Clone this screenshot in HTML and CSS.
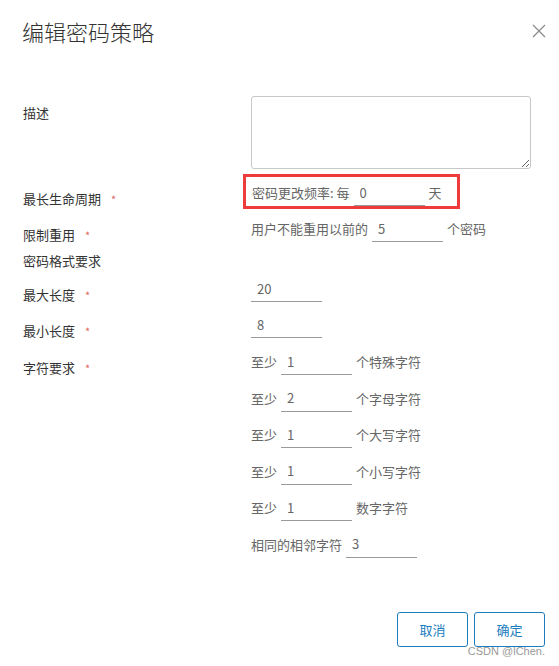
FILE: index.html
```html
<!DOCTYPE html>
<html lang="zh">
<head>
<meta charset="utf-8">
<title>编辑密码策略</title>
<link rel="stylesheet" href="styles.css">
</head>
<body>
<div class="dialog">
  <div class="header">
    <h1 class="title">编辑密码策略</h1>
    <button class="close" aria-label="关闭">
      <svg width="14" height="14" viewBox="0 0 14 14"><path d="M1 1L13 13M13 1L1 13" stroke="#8a8a8a" stroke-width="1.2" fill="none"/></svg>
    </button>
  </div>
  <div class="form">
    <div class="row row-desc">
      <div class="label">描述</div>
      <div class="control"><textarea class="desc"></textarea></div>
    </div>
    <div class="row row-life">
      <div class="label">最长生命周期<span class="req">*</span></div>
      <div class="control">
        <div class="highlight">
          <span class="txt">密码更改频率: 每</span>
          <input class="line" value="0">
          <span class="txt">天</span>
        </div>
      </div>
    </div>
    <div class="row row-reuse">
      <div class="label">限制重用<span class="req">*</span></div>
      <div class="control">
        <span class="txt">用户不能重用以前的</span>
        <input class="line" value="5">
        <span class="txt">个密码</span>
      </div>
    </div>
    <div class="section">密码格式要求</div>
    <div class="row row-max">
      <div class="label">最大长度<span class="req">*</span></div>
      <div class="control"><input class="line first" value="20"></div>
    </div>
    <div class="row row-min">
      <div class="label">最小长度<span class="req">*</span></div>
      <div class="control"><input class="line first" value="8"></div>
    </div>
    <div class="row row-chars">
      <div class="label">字符要求<span class="req">*</span></div>
      <div class="control stack">
        <div class="sub"><span class="txt">至少</span><input class="line" value="1"><span class="txt">个特殊字符</span></div>
        <div class="sub"><span class="txt">至少</span><input class="line" value="2"><span class="txt">个字母字符</span></div>
        <div class="sub"><span class="txt">至少</span><input class="line" value="1"><span class="txt">个大写字符</span></div>
        <div class="sub"><span class="txt">至少</span><input class="line" value="1"><span class="txt">个小写字符</span></div>
        <div class="sub"><span class="txt">至少</span><input class="line" value="1"><span class="txt">数字字符</span></div>
        <div class="sub"><span class="txt">相同的相邻字符</span><input class="line" value="3"></div>
      </div>
    </div>
  </div>
  <div class="footer">
    <button class="btn">取消</button>
    <button class="btn">确定</button>
  </div>
  <div class="watermark">CSDN @lChen.</div>
</div>
</body>
</html>
```
FILE: styles.css
```css
* { box-sizing: border-box; }
html, body { margin: 0; padding: 0; background: #fff; }
body {
  font-family: "Noto Sans CJK SC", "Noto Sans", sans-serif;
  font-size: 13px;
  color: #333;
}
.dialog {
  position: relative;
  width: 559px;
  height: 666px;
}
.header {
  display: flex;
  align-items: center;
  justify-content: space-between;
  padding: 16px 13px 0 22px;
  height: 46px;
}
.title {
  margin: 0;
  font-size: 22px;
  font-weight: 300;
  line-height: 28px;
  color: #333;
}
.close {
  border: 0;
  background: none;
  padding: 0;
  width: 14px;
  height: 14px;
  display: flex;
}
.form {
  display: flex;
  flex-direction: column;
  margin-top: 50px;
}
.row {
  display: grid;
  grid-template-columns: 251px 1fr;
  align-items: start;
}
.label {
  padding-left: 23px;
  padding-top: 10px;
  height: 26px;
  line-height: 18px;
  color: #333;
  white-space: nowrap;
}
.req {
  color: #e06666;
  font-size: 11px;
  margin-left: 10px;
  vertical-align: top;
}
.control {
  display: flex;
  align-items: center;
  height: 26px;
}
.txt {
  color: #666;
  line-height: 18px;
  white-space: nowrap;
}
.line {
  width: 71px;
  height: 26px;
  border: 0;
  border-bottom: 1px solid #9a9a9a;
  padding: 0 6px 1px;
  margin: 0 4px;
  font-family: inherit;
  font-size: 13px;
  color: #666;
  background: transparent;
  outline: none;
}
.line.first { margin-left: 0; }
.row-desc .label { padding-top: 8px; }
.row-desc .control { height: auto; }
.desc {
  display: block;
  width: 280px;
  height: 73px;
  border: 1px solid #c8c8c8;
  border-radius: 3px;
  margin: 0;
  font-family: inherit;
  font-size: 13px;
}
.row-life { margin-top: 5px; }
.row-life .label { padding-top: 16px; height: 35px; }
.row-life .control { height: auto; }
.highlight {
  display: flex;
  align-items: center;
  margin-left: -8px;
  border: 3px solid #ee3b3b;
  padding: 3px 15px 0 6px;
  height: 35px;
}
.row-reuse { margin-top: 7px; }
.section {
  margin-top: 10px;
  padding-left: 23px;
  line-height: 18px;
  color: #333;
}
.row-max { margin-top: 6px; }
.row-min { margin-top: 10px; }
.row-chars { margin-top: 11px; }
.stack {
  flex-direction: column;
  align-items: flex-start;
  height: auto;
  gap: 10.6px;
}
.sub {
  display: flex;
  align-items: center;
  height: 26px;
}
.footer {
  display: flex;
  justify-content: flex-end;
  gap: 6px;
  padding-right: 14px;
  margin-top: 54px;
}
.btn {
  width: 71px;
  height: 35px;
  border: 1px solid #1b7dbd;
  border-radius: 3px;
  background: #fff;
  color: #1b7dbd;
  font-family: inherit;
  font-size: 13px;
  padding: 0;
}
.watermark {
  position: absolute;
  right: 14px;
  top: 644px;
  font-family: "Liberation Sans", Arial, sans-serif;
  font-size: 11px;
  color: #9a9a9a;
  line-height: 14px;
}
```
